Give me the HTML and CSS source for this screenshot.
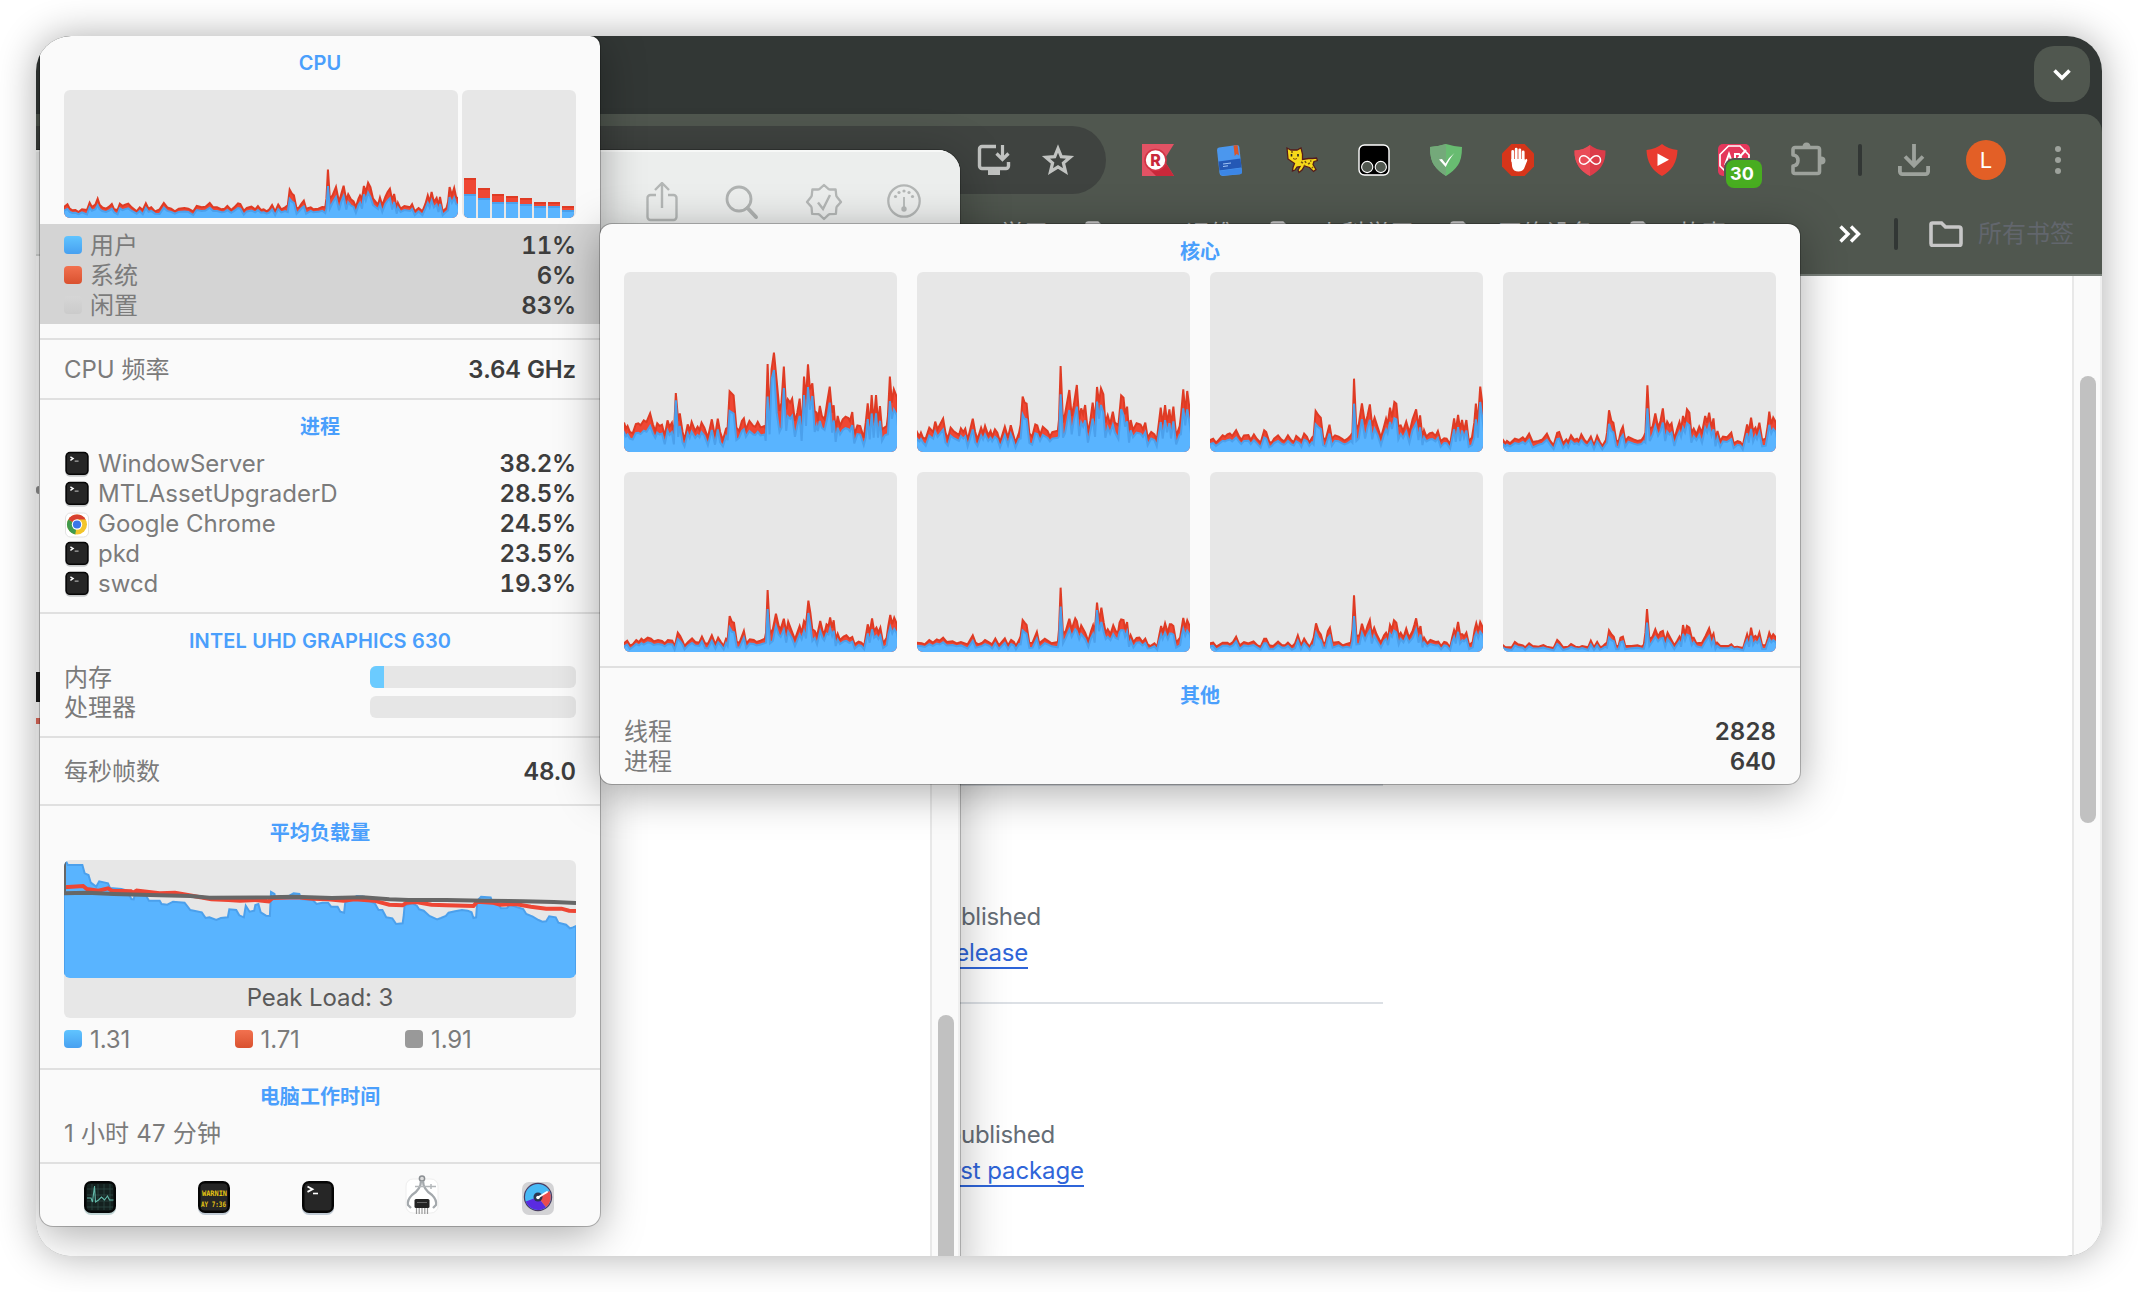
FILE: index.html
```html
<!DOCTYPE html>
<html lang="zh-CN">
<head>
<meta charset="utf-8">
<title>CPU</title>
<link rel="stylesheet" href="styles.css">
</head>
<body>
<svg class="defs" width="0" height="0">
  <defs>
    <symbol id="term" viewBox="0 0 32 36">
      <rect x="1" y="2" width="30" height="31" rx="6" fill="#8a8d90" opacity=".45"/>
      <rect x="1" y="1" width="30" height="30" rx="6" fill="#060606"/>
      <rect x="3" y="3" width="26" height="26" rx="4" fill="#262626"/>
      <path d="M7.500 7.500l3.500 2.200L7.500 12" fill="none" stroke="#fff" stroke-width="1.800"/>
      <path d="M13 13h5" stroke="#bbb" stroke-width="1.400"/>
    </symbol>
    <symbol id="folder" viewBox="0 0 34 26">
      <path d="M3.500 2h9l4 4H30a2 2 0 0 1 2 2v14.500a2 2 0 0 1-2 2H4a2 2 0 0 1-2-2V3.500A1.500 1.500 0 0 1 3.500 2z" fill="none" stroke="#c7c7c7" stroke-width="3.600"/>
    </symbol>
  </defs>
</svg>
<main class="desktop">
  <section class="browser">
    <div class="tabstrip">
      <button class="tab-search"><svg width="18" height="12" viewBox="0 0 18 12"><path d="M1.500 1.500L9 9l7.500-7.500" fill="none" stroke="#fff" stroke-width="3.600"/></svg></button>
    </div>
    <div class="chrome">
      <div class="toolbar">
        <div class="omnibox">
          <svg width="34" height="32" viewBox="0 0 34 32"><path d="M19 2.500H5A2.500 2.500 0 0 0 2.500 5v17A2.500 2.500 0 0 0 5 24.500h24a2.500 2.500 0 0 0 2.500-2.500v-4" fill="none" stroke="#c1c3c1" stroke-width="3.400"/><path d="M11 25h12v6H11z" fill="#c1c3c1"/><path d="M25.500 1v14M19.500 9.500l6 6 6-6" fill="none" stroke="#c1c3c1" stroke-width="3.200"/></svg>
          <svg width="34" height="34" viewBox="0 0 34 34"><path d="M17 5.500l3.300 8.200 8.800.6-6.700 5.700 2.100 8.600-7.500-4.700-7.500 4.700 2.100-8.600-6.700-5.700 8.800-.6z" fill="none" stroke="#c1c3c1" stroke-width="3.200"/></svg>
        </div>
        <div class="extensions">
          <svg width="32" height="32" viewBox="0 0 32 32"><path d="M0 0h32L22 16l10 16H0z" fill="#e25264"/><path d="M8 26l14-10 10 16H14z" fill="#c9283a"/><circle cx="13.500" cy="16" r="10.500" fill="#fff" stroke="#d23345" stroke-width="1.600"/><text x="13.500" y="21.500" text-anchor="middle" class="glyph-r">R</text></svg>
          <svg width="32" height="32" viewBox="0 0 32 32"><path d="M3 6Q3 4 5 3.600L23 1q2 0 2.300 2L28 28q0 2-2 2.300L9 32q-3 0-3.500-3z" fill="#4b97ee"/><path d="M4.500 17.500l22-3 1 9-22 3z" fill="#2458b5"/><path d="M6 27l21.500-3 .5 4q0 2-2 2.300L9 31.500q-3 0-3-4.500z" fill="#3c86e6"/><path d="M19.500 1.600l4-.6 1.500 10.500-2.300-1.500-2 2z" fill="#d8562c"/><path d="M9 20l8-1M9 22.500l5-.7" stroke="#9fc4f5" stroke-width="1"/></svg>
          <svg width="32" height="32" viewBox="0 0 32 32"><path d="M1 4l4 2h6l4-2 1.500 6v5.500l6-1h4l4-.5 1 2.500-3.500 1-1 3 3 5-2.500 2-4-4-5-1.500-2.500 4-3 2.500-1-2.500 2-3.500-3 .5-2 3-2.500 1 .5-3.500 1.500-4L2 15z" fill="#f7d91a" stroke="#541c1c" stroke-width="1.300"/><path d="M5.500 10v2.500M12 10v2.500" stroke="#222" stroke-width="1.600"/><path d="M15 18l2 1M19 17l1 2M22 20l2-1M24 17h1.500M18 21l1 1M26 23l1 1M5 8h2" stroke="#7a5a10" stroke-width="1.600"/><path d="M7 14.500q2 1.500 4 0" stroke="#7a4a10" fill="none"/></svg>
          <svg width="32" height="32" viewBox="0 0 32 32"><rect x="1" y="1" width="30" height="30" rx="5.500" fill="#000" stroke="#fff" stroke-width="1.400"/><circle cx="9.200" cy="23" r="5.600" fill="#50574f" stroke="#fff" stroke-width="1.100"/><circle cx="22.800" cy="23" r="5.600" fill="#50574f" stroke="#fff" stroke-width="1.100"/></svg>
          <svg width="32" height="32" viewBox="0 0 32 32"><path d="M16 0q8 2.500 16 3 0 12-4 18T16 32Q8 27 4 21T0 3q8-.5 16-3z" fill="#68bc71"/><path d="M16 0v32Q8 27 4 21T0 3q8-.5 16-3z" fill="#74a97a"/><path d="M9 15.500l3-.5 3.500 4.500Q19 13 24.500 9 20 14 15.700 23z" fill="#fff"/></svg>
          <svg width="32" height="32" viewBox="0 0 32 32"><path d="M9.400 0h13.200L32 9.400v13.200L22.600 32H9.400L0 22.600V9.400z" fill="#d6351a"/><path d="M10.700 17V7.500M14.200 15V5.200M17.800 15V5.800M21.200 16V8" stroke="#fff" stroke-width="2.800" stroke-linecap="round"/><path d="M9.300 15h13.300v1.500l1.500-1.800q1.700.3 1 2.300l-3 7.500q-1.500 3-5.600 3-5.200 0-6.300-4.500z" fill="#fff"/></svg>
          <svg width="32" height="32" viewBox="0 0 32 32"><path d="M16 1q6 5 15.500 5.500Q32 24 16 32 0 24 .500 6.500 10 6 16 1z" fill="#dc3c49"/><path d="M16 1v31Q0 24 .500 6.500 10 6 16 1z" fill="#e94c57"/><path d="M16 16c-3-4-5-4.200-6.300-4.200a4.200 4.200 0 0 0 0 8.400c1.600 0 3.300-.4 6.300-4.200s5-4.200 6.300-4.200a4.200 4.200 0 0 1 0 8.400c-1.600 0-3.300-.4-6.300-4.200z" fill="none" stroke="#fff" stroke-width="1.500"/></svg>
          <svg width="32" height="32" viewBox="0 0 32 32"><path d="M16 0q6 5 15.500 6Q31 24 16 32 1 24 .500 6 10 5 16 0z" fill="#e93b2f"/><path d="M11.500 9.500v12.500L23 15.800z" fill="#fff"/></svg>
          <span class="ext-badged">
            <svg width="32" height="32" viewBox="0 0 32 32"><rect width="32" height="32" rx="5" fill="#e5375b"/><path d="M10.500 2h11.500L31 11v11l-8 8H10L2 22V10.500z" fill="none" stroke="#fff" stroke-width="1.700"/><path d="M7 21l4-11 4 11M8 17.500h5M17 21V10h4l2 3-2 3 2 3-2 3M17 18L28 6" fill="none" stroke="#fff" stroke-width="2"/></svg>
            <b class="badge">30</b>
          </span>
          <svg width="36" height="36" viewBox="0 0 36 36"><path d="M5 6.500h22.500a2 2 0 0 1 2 2v22a2 2 0 0 1-2 2H5a2 2 0 0 1-2-2V25q5-.5 5-5.500T3 14V8.500a2 2 0 0 1 2-2z" fill="none" stroke="#9da29c" stroke-width="3.600" stroke-linejoin="round"/><path d="M12.500 6q0-4.500 4-4.500t4 4.500zM31 15.500q4.500 0 4.500 4t-4.500 4z" fill="#9da29c"/></svg>
        </div>
        <i class="bar"></i>
        <svg class="dl" width="32" height="32" viewBox="0 0 32 32"><path d="M16 0v21M7 12.500l9 9 9-9" fill="none" stroke="#9da29c" stroke-width="3.800"/><path d="M1.900 22v5.600a2.500 2.500 0 0 0 2.500 2.500h23.200a2.500 2.500 0 0 0 2.500-2.500V22" fill="none" stroke="#9da29c" stroke-width="3.800"/></svg>
        <span class="avatar">L</span>
        <span class="kebab"><i></i><i></i><i></i></span>
      </div>
      <div class="bookmarks">
        <div class="marks">
          <span class="mark m1">学习</span>
          <span class="mark m2"><svg class="fold" width="34" height="26"><use href="#folder"/></svg><span>运维</span></span>
          <span class="mark m3"><svg class="fold" width="34" height="26"><use href="#folder"/></svg><span>上科学习</span></span>
          <span class="mark m4"><svg class="fold" width="34" height="26"><use href="#folder"/></svg><span>网络设备</span></span>
          <span class="mark m5"><svg class="fold" width="34" height="26"><use href="#folder"/></svg><span>故事</span></span>
        </div>
        <svg class="more" width="22" height="18" viewBox="0 0 22 18"><path d="M1.500 1.500L9 9l-7.500 7.500M12 1.500L19.500 9 12 16.500" fill="none" stroke="#fff" stroke-width="3.400"/></svg>
        <i class="bar"></i>
        <svg class="all-icon" width="34" height="26"><use href="#folder"/></svg>
        <span class="all">所有书签</span>
      </div>
    </div>
    <div class="page">
      <aside class="side">
        <div class="block b1">
          <p class="note n1">No releases published</p>
          <a class="link l1">Create a new release</a>
        </div>
        <div class="block b2">
          <p class="note n2">No packages published</p>
          <a class="link l2">Publish your first package</a>
        </div>
      </aside>
      <div class="track"><i class="thumb"></i></div>
    </div>
  </section>

  <section class="front">
    <div class="front-bar">
      <svg width="34" height="40" viewBox="0 0 34 40"><path d="M11 13H5.500a3 3 0 0 0-3 3v19a3 3 0 0 0 3 3h23a3 3 0 0 0 3-3V16a3 3 0 0 0-3-3H23M17 26V2M10 8l7-7 7 7" fill="none" stroke="#b4b7b6" stroke-width="2.400"/></svg>
      <svg width="34" height="36" viewBox="0 0 34 36"><circle cx="14" cy="15" r="12" fill="none" stroke="#b0b3b2" stroke-width="2.800"/><path d="M22.500 24l8.500 9" stroke="#b0b3b2" stroke-width="4" stroke-linecap="round"/></svg>
      <svg width="38" height="38" viewBox="0 0 38 38"><path d="M19 2l4.600 4.200 1 .3 6-.2.700 6.500.5 1L36 19l-4.200 4.600-.4 1-.5 6.300-6.200.3-1.100.4L19 36l-4.600-4.400-1.100-.4-6.200-.3-.5-6.300-.4-1L2 19l4.200-5.200.5-1 .7-6.500 6 .2 1-.3z" fill="none" stroke="#b4b7b6" stroke-width="2.300" stroke-linejoin="round"/><path d="M13 19.500l5 6.500 7-14" fill="none" stroke="#b4b7b6" stroke-width="2.400"/></svg>
      <svg width="36" height="36" viewBox="0 0 36 36"><circle cx="18" cy="18" r="15.700" fill="none" stroke="#b4b7b6" stroke-width="2.300"/><path d="M18 14v12" stroke="#b4b7b6" stroke-width="1.800"/><circle cx="18" cy="26" r="2.700" fill="#b4b7b6"/><g fill="#b4b7b6"><circle cx="9.500" cy="13.500" r="1.600"/><circle cx="13" cy="9.500" r="1.600"/><circle cx="18" cy="8" r="1.600"/><circle cx="23" cy="9.500" r="1.600"/><circle cx="26.500" cy="13.500" r="1.600"/></g></svg>
    </div>
    <div class="front-page">
      <div class="slivers"><i class="s1"></i><i class="s2"></i><i class="s3"></i></div>
      <div class="track"><i class="thumb"></i></div>
    </div>
  </section>

  <section class="panel cpu">
    <header class="title t-cpu">CPU</header>
    <div class="graphs">
      <svg class="chart" data-series="cpu" viewBox="0 0 1030 384" preserveAspectRatio="none"></svg>
      <div class="bars">
        <i style="height:40px;--u:24px"></i><i style="height:30px;--u:20px"></i><i style="height:24px;--u:16px"></i><i style="height:22px;--u:16px"></i><i style="height:20px;--u:14px"></i><i style="height:16px;--u:12px"></i><i style="height:16px;--u:12px"></i><i style="height:12px;--u:8px"></i>
      </div>
    </div>
    <div class="selected">
      <div class="row"><i class="sw blue"></i><span>用户</span><b>11%</b></div>
      <div class="row"><i class="sw red"></i><span>系统</span><b>6%</b></div>
      <div class="row"><i class="sw idle"></i><span>闲置</span><b>83%</b></div>
    </div>
    <div class="sect freq"><div class="row"><span>CPU 频率</span><b>3.64 GHz</b></div></div>
    <div class="sect procs">
      <header class="title">进程</header>
      <div class="row"><svg class="app" width="26" height="28"><use href="#term"/></svg><span>WindowServer</span><b>38.2%</b></div>
      <div class="row"><svg class="app" width="26" height="28"><use href="#term"/></svg><span>MTLAssetUpgraderD</span><b>28.5%</b></div>
      <div class="row"><svg class="app" width="26" height="28" viewBox="0 0 26 28"><rect x="1.500" y="2" width="23" height="24" rx="5" fill="#fff" stroke="#e2e2e2"/><circle cx="13" cy="13.500" r="10" fill="#f3c52b"/><path d="M13 13.500L4.300 8.500A10 10 0 0 0 11.500 23.400z" fill="#3f9a4c"/><path d="M13 13.500L4.300 8.500A10 10 0 0 1 21.700 8.500z" fill="#d8402f"/><path d="M13 8.500h8.700L17 16l-5.500 7.400z" fill="#f3c52b"/><circle cx="13" cy="13.500" r="5.200" fill="#fff"/><circle cx="13" cy="13.500" r="4.100" fill="#3a76e8"/></svg><span>Google Chrome</span><b>24.5%</b></div>
      <div class="row"><svg class="app" width="26" height="28"><use href="#term"/></svg><span>pkd</span><b>23.5%</b></div>
      <div class="row"><svg class="app" width="26" height="28"><use href="#term"/></svg><span>swcd</span><b>19.3%</b></div>
    </div>
    <div class="sect gpu">
      <header class="title">INTEL UHD GRAPHICS 630</header>
      <div class="row"><span>内存</span><div class="meter"><i style="width:14px"></i></div></div>
      <div class="row"><span>处理器</span><div class="meter"></div></div>
    </div>
    <div class="sect fps"><div class="row"><span>每秒帧数</span><b>48.0</b></div></div>
    <div class="sect load">
      <header class="title">平均负载量</header>
      <div class="load-card">
        <svg class="load-chart" viewBox="0 0 1338 354" preserveAspectRatio="none">
          <path class="l-area" d="M0 360L0 8 6 6 10 15 48 15 54 40 64 45 70 68 84 80 92 64 115 70 120 84 150 87 165 92 176 117 182 118 186 100 215 108 222 122 250 122 255 132 270 134 285 125 315 128 322 138 330 150 360 157 370 174 380 172 398 180 410 174 428 172 432 148 450 150 458 166 470 172 475 137 485 155 497 152 500 135 508 132 514 157 528 167 538 168 541 96 550 102 552 115 560 110 585 110 600 100 615 102 620 117 650 120 660 132 675 128 690 128 698 140 715 140 722 155 732 158 735 127 750 120 765 108 785 110 792 120 812 130 822 150 832 150 842 172 858 175 868 192 885 190 888 165 890 137 910 130 922 137 928 148 940 152 955 168 975 178 985 174 998 168 1005 158 1022 154 1040 150 1055 152 1065 157 1070 174 1077 172 1080 122 1090 110 1115 112 1120 130 1135 132 1142 145 1158 144 1165 134 1185 142 1200 147 1208 162 1225 170 1240 180 1250 185 1260 184 1268 169 1285 172 1292 188 1312 194 1322 205 1330 202 1338 198V360z"/>
          <path class="l-red" d="M0 82L50 78 60 87 90 92 115 85 125 92 175 94 180 98 190 92 250 100 290 98 320 104 385 118 430 120 460 122 500 120 535 124 545 114 610 112 650 116 690 118 730 122 760 118 810 122 850 134 885 136 895 128 920 126 960 134 1000 136 1070 138 1080 125 1120 128 1140 134 1180 132 1220 140 1260 146 1300 146 1320 152 1338 153"/>
          <path class="l-gray" d="M0 6V100L60 98 130 102 250 106 330 108 380 113 540 112 600 110 700 114 780 112 850 118 900 120 1000 120 1100 122 1200 124 1280 126 1338 129"/>
        </svg>
        <p>Peak Load: 3</p>
      </div>
      <div class="legend">
        <span><i class="sw blue"></i>1.31</span><span><i class="sw red"></i>1.71</span><span><i class="sw gray"></i>1.91</span>
      </div>
    </div>
    <div class="sect uptime">
      <header class="title">电脑工作时间</header>
      <div class="row"><span>1 小时 47 分钟</span></div>
    </div>
    <div class="sect dock">
      <svg width="36" height="38" viewBox="0 0 36 38"><rect x="2" y="4" width="32" height="32" rx="7" fill="#9bb" opacity=".6"/><rect x="2" y="2" width="32" height="32" rx="7" fill="#050707"/><rect x="4.500" y="4.500" width="27" height="27" rx="4" fill="#14211f"/><path d="M10 5v26M16 5v26M22 5v26M28 5v26M5 10h26M5 16h26M5 22h26M5 28h26" stroke="#2c4a45" stroke-width=".8"/><path d="M5 19h4l1.500 4L12.500 7l1 16 3-2 3-3 3 3 3-4 2 4h4" fill="none" stroke="#62b8a8" stroke-width="1.100"/></svg>
      <svg width="36" height="38" viewBox="0 0 36 38"><rect x="2" y="4" width="32" height="32" rx="7" fill="#9ab" opacity=".6"/><rect x="2" y="2" width="32" height="32" rx="7" fill="#050505"/><rect x="4.500" y="4.500" width="27" height="27" rx="4" fill="#262626"/><text class="warn" x="6" y="17" textLength="25" lengthAdjust="spacingAndGlyphs">WARNIN</text><text class="warn" x="5" y="27.500" textLength="25" lengthAdjust="spacingAndGlyphs">AY 7:36</text></svg>
      <svg width="36" height="38" viewBox="0 0 36 38"><rect x="2" y="4" width="32" height="32" rx="7" fill="#9ab" opacity=".6"/><rect x="2" y="2" width="32" height="32" rx="7" fill="#050505"/><rect x="4.500" y="4.500" width="27" height="27" rx="4" fill="#262626"/><path d="M7.500 7.500l5 2.700-5 2.700" fill="none" stroke="#fff" stroke-width="1.800"/><path d="M13 14.500h5" stroke="#fff" stroke-width="1.600"/></svg>
      <svg width="36" height="42" viewBox="0 0 36 42"><rect x="2" y="4" width="32" height="34" rx="7" fill="#fff" stroke="#eee"/><circle cx="18" cy="3.500" r="2.600" fill="#ddd" stroke="#8a8e92" stroke-width="1.500"/><path d="M17 6Q17 14 8 20q-5 5-4 10l3 3M19 6q0 8 9 14 5 5 4 10l-3 3" fill="none" stroke="#a4a9ad" stroke-width="2.300"/><path d="M11 11.500h21M27 9v5" stroke="#b3b7ba" stroke-width="1.500"/><rect x="10.500" y="24" width="15" height="9" rx="1.500" fill="#232323"/><path d="M13 27.500h10" stroke="#666"/><path d="M12.500 33v6M15.200 33v6M18 33v6M20.800 33v6M23.500 33v6" stroke="#999" stroke-width="1.200"/></svg>
      <svg width="36" height="38" viewBox="0 0 36 38"><rect x="2" y="3" width="32" height="33" rx="7" fill="#d3d3d5"/><circle cx="18" cy="18" r="14.200" fill="#4a3d63"/><circle cx="18" cy="18" r="13" fill="#47b9f5"/><path d="M18 18L5.700 22.500a13 13 0 0 0 20.300 5.700z" fill="#5a2be0"/><path d="M18 18l8 10.200A13 13 0 0 0 29.500 12z" fill="#ea4c4c"/><circle cx="18" cy="18" r="4.500" fill="#2c3550"/><path d="M18 18.500l9-5.500" stroke="#fff" stroke-width="2" stroke-linecap="round"/><circle cx="18" cy="18.500" r="1.800" fill="#fff"/></svg>
    </div>
  </section>

  <section class="panel cores">
    <header class="title">核心</header>
    <div class="core-grid">
      <svg class="chart" data-series="c1" viewBox="0 0 690 540" preserveAspectRatio="none"></svg>
      <svg class="chart" data-series="c2" viewBox="0 0 690 540" preserveAspectRatio="none"></svg>
      <svg class="chart" data-series="c3" viewBox="0 0 690 540" preserveAspectRatio="none"></svg>
      <svg class="chart" data-series="c4" viewBox="0 0 690 540" preserveAspectRatio="none"></svg>
      <svg class="chart" data-series="c5" viewBox="0 0 690 540" preserveAspectRatio="none"></svg>
      <svg class="chart" data-series="c6" viewBox="0 0 690 540" preserveAspectRatio="none"></svg>
      <svg class="chart" data-series="c7" viewBox="0 0 690 540" preserveAspectRatio="none"></svg>
      <svg class="chart" data-series="c8" viewBox="0 0 690 540" preserveAspectRatio="none"></svg>
    </div>
    <div class="sect other">
      <header class="title">其他</header>
      <div class="row"><span>线程</span><b>2828</b></div>
      <div class="row"><span>进程</span><b>640</b></div>
    </div>
  </section>
</main>
<script src="charts.js"></script>
</body>
</html>
```
FILE: styles.css
```css
* { box-sizing: border-box; }
body {
  margin: 0; width: 2138px; height: 1292px; overflow: hidden; background: #fff;
  font-family: Inter, "Noto Sans CJK SC", sans-serif; font-size: 24px; line-height: 30px;
}
p { margin: 0; }
i { display: block; }
svg { display: block; flex: none; }
.defs { position: absolute; }
.desktop {
  position: relative; margin: 36px 0 0 36px; width: 2066px; height: 1220px;
  border-radius: 35px; box-shadow: 0 0 38px rgba(0,0,0,.32); background: #fff;
  overflow: clip; overflow-clip-margin: 0;
}

/* Browser window in the back */
.browser { position: absolute; inset: 0; background: #323735; display: flex; flex-direction: column; }
.tabstrip { height: 78px; padding: 10px 12px; display: flex; justify-content: flex-end; flex: none; }
.tab-search {
  width: 56px; height: 56px; border: 0; border-radius: 20px; background: #50574f;
  display: flex; align-items: center; justify-content: center; padding: 2px 0 0;
}
.chrome { height: 162px; flex: none; background: #50574f; border-radius: 0 18px 0 0; border-bottom: 2px solid #7b827c; }
.toolbar { height: 92px; padding: 12px 0 12px; display: flex; align-items: center; }
.omnibox {
  width: 1070px; height: 68px; border-radius: 0 34px 34px 0; background: #3f4340;
  display: flex; justify-content: flex-end; align-items: center; gap: 30px; padding-right: 31px; flex: none;
}
.extensions { display: flex; align-items: center; gap: 40px; margin-left: 36px; }
.extensions > :last-child { margin: -2px 0 0 0; }
.ext-badged { position: relative; }
.badge {
  position: absolute; left: 8px; top: 16px; width: 36px; height: 28px; border-radius: 8px;
  background: #48ad20; box-shadow: 0 0 0 2px #50574f; color: #fff; font-size: 18px; font-weight: 700;
  line-height: 28px; text-align: center; padding-right: 4px;
}
.glyph-r { font: 800 16px Inter, sans-serif; fill: #c9283a; }
.bar { width: 4px; height: 32px; border-radius: 2px; background: #323735; flex: none; }
.toolbar .bar { margin-left: 32px; }
.dl { margin-left: 36px; }
.avatar {
  width: 40px; height: 40px; border-radius: 50%; background: #e35f26; color: #fff; flex: none;
  margin-left: 36px; font-size: 22px; line-height: 41px; text-align: center;
}
.kebab { display: flex; flex-direction: column; gap: 5px; margin-left: 49px; }
.kebab i { width: 6px; height: 6px; border-radius: 50%; background: #9da29c; }
.bookmarks { height: 56px; display: flex; align-items: center; color: #c7c7c7; }
.marks { width: 1803px; display: flex; align-items: center; padding-left: 964px; flex: none; white-space: nowrap; }
.mark { display: flex; align-items: center; gap: 14px; line-height: 30px; flex: none; }
.m1 { width: 72px; } .m2 { width: 185px; } .m3 { width: 180px; } .m4 { width: 180px; }
.m2 { margin-left: 13px; }
.m2 > span { margin-left: 53px; }
.bookmarks .bar { margin-left: 33px; }
.all-icon { margin-left: 31px; }
.all { margin-left: 15px; color: #62666d; }
.page { flex: 1; background: #fff; display: flex; justify-content: space-between; min-height: 0; }
.side { width: 1347px; padding-top: 508px; display: flex; flex-direction: column; }
.block { border-top: 2px solid #dce0e5; height: 218px; padding-top: 113px; }
.note, .link { display: block; text-align: right; height: 36px; line-height: 36px; letter-spacing: -.25px; white-space: nowrap; }
.note { color: #656d76; }
.link { color: #2f65d9; text-decoration: underline; text-decoration-thickness: 2px; text-underline-offset: 6px; }
.n1 { width: 1005px; } .l1 { width: 992px; } .n2 { width: 1019px; } .l2 { width: 1048px; letter-spacing: -.1px; }
.track { width: 30px; border-left: 2px solid #e8e8e8; border-right: 2px solid #efefef; background: #fafafa; padding-left: 6px; }
.thumb { width: 16px; border-radius: 8px; background: #c1c1c1; }
.page .thumb { margin-top: 100px; height: 447px; }

/* Light window in front of the browser */
.front {
  position: absolute; left: -20px; top: 114px; width: 944px; height: 1140px; background: #fff;
  border-radius: 22px; box-shadow: 0 0 0 1px rgba(0,0,0,.22), 0 10px 50px rgba(0,0,0,.3);
  overflow: hidden; display: flex; flex-direction: column;
}
.front-bar {
  height: 106px; flex: none; background: #eceeed; border-bottom: 2px solid #d4d6d5;
  border-top: 2px solid #f7f8f7; display: flex; justify-content: flex-end; align-items: center;
  padding: 0 38px 3px 0; gap: 46px;
}
.front-bar svg:nth-child(3) { margin-right: -3px; }
.front-bar svg:nth-child(4) { margin-top: -1px; }
.front-page { flex: 1; display: flex; justify-content: space-between; }
.slivers { padding-left: 20px; }
.s1 { width: 3px; height: 8px; margin-top: 230px; border-radius: 4px 0 0 4px; background: #8b8b8b; }
.s2 { width: 4px; height: 30px; margin-top: 178px; background: #1b1b1b; }
.s3 { width: 4px; height: 6px; margin-top: 16px; background: #e0695a; }
.front .track { padding-left: 6px; }
.front .thumb { margin-top: 759px; height: 300px; }

/* Popup panels */
.panel { position: absolute; background: #fafafa; box-shadow: 0 0 0 1px rgba(0,0,0,.24), 0 8px 44px rgba(0,0,0,.34); color: #7b7b7b; }
.cpu { left: 4px; top: 0; width: 560px; height: 1190px; border-radius: 0 10px 13px 13px; }
.cores { left: 564px; top: 188px; width: 1200px; height: 560px; border-radius: 12px; padding-top: 13px; }
.title { color: #4a9ffc; font-size: 20px; font-weight: 600; line-height: 30px; text-align: center; letter-spacing: .1px; }
.row { display: flex; align-items: center; height: 30px; padding: 0 24px; }
.row span { letter-spacing: -.12px; }
.row span:lang(zh) { letter-spacing: 0; }
.row b { margin-left: auto; color: #3d3d3d; font-weight: 600; font-variant-numeric: tabular-nums; letter-spacing: -.15px; }
.sect { border-top: 2px solid #e0e0e0; }
.t-cpu { padding-top: 12px; height: 54px; }
.graphs { display: flex; gap: 4px; padding: 0 24px; height: 134px; }
.chart { background: #e7e7e7; border-radius: 6px; overflow: hidden; }
.graphs .chart { width: 394px; height: 128px; }
.bars { width: 114px; height: 128px; background: #e7e7e7; border-radius: 6px; display: flex; align-items: flex-end; gap: 2px; padding: 0 2px; overflow: hidden; }
.bars i {
  width: 12px; border-top: 2px solid #df3b24;
  background: linear-gradient(#59b4ff, #59b4ff) bottom / 100% calc(var(--u) - 2px) no-repeat,
    linear-gradient(#4ba0ec, #4ba0ec) bottom / 100% var(--u) no-repeat, #ef4734;
}
.bars i:first-child { border-bottom-left-radius: 5px; }
.bars i:last-child { border-bottom-right-radius: 5px; }
.selected { height: 100px; background: #d4d4d4; padding-top: 7px; margin-bottom: 14px; }
.sw { width: 18px; height: 18px; border-radius: 4px; margin-right: 8px; flex: none; }
.selected .sw { margin-top: -3px; }
.blue { background: linear-gradient(#60c4ff, #47a0f0); }
.red { background: linear-gradient(#f2714f, #d9512f); }
.idle { background: linear-gradient(#d6d6d6, #cbcbcb); }
.gray { background: #999; }
.freq { height: 60px; padding-top: 15px; }
.procs { height: 214px; padding-top: 12px; }
.procs .title { height: 37px; }
.app { margin: 2px 8px 0 0; }
.gpu { height: 124px; padding-top: 12px; }
.gpu .title { height: 37px; letter-spacing: .15px; }
.meter { margin-left: auto; margin-top: -3px; width: 206px; height: 22px; border-radius: 6px; background: #e6e6e6; overflow: hidden; }
.meter i { height: 22px; background: #6bcbff; }
.fps { height: 68px; padding-top: 19px; }
.load { height: 264px; padding-top: 12px; }
.load .title { height: 42px; }
.load-card { margin: 0 24px; height: 158px; border-radius: 6px; background: #e7e7e7; color: #5a5a5a; text-align: center; overflow: hidden; }
.load-card p { line-height: 40px; letter-spacing: -.1px; }
.load-chart { width: 512px; height: 118px; border-radius: 6px; overflow: hidden; }
.l-area { fill: #59b4ff; stroke: #4ba0ec; stroke-width: 2px; vector-effect: non-scaling-stroke; }
.l-red, .l-gray { fill: none; stroke: #ee4634; stroke-width: 4px; vector-effect: non-scaling-stroke; }
.l-gray { stroke: #676767; }
.legend { display: flex; padding: 7px 24px 0; }
.legend span { display: flex; align-items: center; width: 170.500px; letter-spacing: -.1px; }
.legend .sw { margin-top: -2px; }
.uptime { height: 94px; padding-top: 12px; }
.uptime .title { height: 37px; }
.uptime .row span { letter-spacing: .2px; }
.dock { height: 64px; display: flex; align-items: center; padding: 6px 0 0 42px; }
.dock svg:nth-child(1) { margin-right: 78px; }
.dock svg:nth-child(2), .dock svg:nth-child(3) { margin-right: 68px; }
.dock svg:nth-child(4) { margin: -4px 80px 0 0; }
.warn { font: 700 7.500px "DejaVu Sans Mono", monospace; fill: #e5c413; }
.cores > .title { height: 35px; }
.core-grid { display: grid; grid-template-columns: repeat(4, 273px); gap: 20px; padding: 0 24px; height: 394px; grid-auto-rows: 180px; }
.core-grid .chart { width: 273px; height: 180px; }
.other { padding-top: 13px; }
.other .title { height: 36px; }
.area-total { fill: #ef4734; stroke: #df3b24; stroke-width: 2px; vector-effect: non-scaling-stroke; }
.area-user { fill: #59b4ff; stroke: #4ba0ec; stroke-width: 2px; vector-effect: non-scaling-stroke; }
```
FILE: charts.js
```js
// Samples are "position:load" or "position:load:user"; user load defaults to a share of the total.
const series = {
  cpu: "0:35,9:43,15:30,22:25,30:26,38:20,47:28,60:26,67:48,73:35,82:42,88:60,93:42,100:34,110:30,118:36,125:44,131:28,140:26,146:45,153:38,160:42,168:45,177:34,190:22,198:34,206:26,214:46,221:30,228:34,238:22,250:28,261:47,270:34,280:30,290:22,300:30,315:32,325:30,338:22,347:38,360:34,370:36,381:47,390:34,400:34,412:28,420:30,427:38,437:26,445:34,455:46,461:44,470:24,478:32,490:36,500:28,507:38,515:26,522:28,530:22,537:28,544:41,552:22,560:42,568:28,578:34,585:40,590:87,596:75,601:70,608:30,615:34,621:45,627:54,633:30,645:34,652:28,665:30,675:35,683:34,686:60,690:147:98,695:60,702:70,711:95,719:50,725:75,731:99,738:55,743:73,750:58,757:52,763:35,770:60,774:70,779:60,784:98:73,789:80,795:108:78,801:95,808:60,815:50,821:42,826:63,832:40,840:65,846:80,852:90,858:55,863:74,870:30,873:47,880:30,890:38,905:34,910:43,917:22,927:32,937:22,945:45,951:70,956:50,961:80,967:50,974:62,979:40,983:65,990:22,1000:32,1004:50,1008:95,1014:70,1020:92,1025:65,1030:60",
  c1: "0:90,5:72,9:80,15:62,22:58,30:86,36:88,42:82,50:97,57:92,66:118,73:85,79:65,84:88,90:80,96:84,103:50,110:97,115:78,121:90,126:50,131:179:157,137:95,141:118,148:62,153:38,161:85,166:65,171:92,180:65,186:78,191:68,196:90,203:75,212:45,222:100,230:48,237:102,243:62,250:38,258:72,262:75,267:184,277:172,284:75,291:65,298:95,303:103,308:70,317:95,327:80,332:78,338:92,345:76,356:80,358:70,363:266:168,368:110,373:250:220,379:300:248,386:215:120,393:125,398:150,404:258:194,410:130,414:160,420:150,425:162,432:95,438:120,444:162,449:70,455:228:173,460:160,465:265:197,470:190,476:208:170,482:125,487:120,490:95,495:140,500:110,507:100,514:155,520:198:150,526:120,530:142,535:65,540:110,546:80,553:100,560:108,567:104,571:95,577:122,582:55,590:82,597:80,606:45,611:90,616:148,621:80,626:173,631:90,637:173,642:90,647:140,652:70,659:76,664:80,667:110,672:228,677:150,682:190,690:165",
  c2: "0:62,6:48,10:60,15:45,22:42,31:75,36:68,41:62,46:93,52:70,66:102,72:60,78:42,85:75,92:65,100:58,106:52,111:73,117:62,122:72,128:38,141:102,147:62,153:40,162:75,167:58,172:80,180:52,186:65,190:48,197:70,203:60,210:32,222:78,230:45,237:82,243:55,249:30,258:60,262:85,267:168,272:150,277:147,284:58,291:48,299:85,304:82,311:52,318:78,330:65,336:48,342:62,356:66,359:100,363:260:175,369:90,374:115,385:188,391:110,396:140,404:203,410:100,415:133,420:115,425:143,432:60,438:95,444:150,450:95,455:197:153,460:150,465:193:143,471:175,476:90,482:112,488:85,495:123,500:90,509:82,516:172:131,522:165,526:115,531:138,536:60,540:98,546:68,555:88,565:84,571:70,577:90,583:45,592:62,600:55,606:38,616:135,621:85,627:143,632:90,638:130,642:85,648:138,655:50,664:80,667:110,673:190:133,678:120,683:185:130,690:120",
  c3: "0:38,8:42,15:30,22:38,32:52,38:48,44:55,50:58,56:50,66:67,73:50,79:38,86:52,97:53,103:38,111:55,118:42,128:30,137:67,142:62,150:32,156:30,162:42,172:52,180:40,186:35,190:38,197:52,205:38,212:32,218:50,226:42,231:35,238:57,245:48,251:30,258:45,262:50,267:125,274:112,280:105,286:45,292:38,302:84,308:42,316:52,325:48,333:42,340:36,348:42,356:52,360:60,364:222:147,370:70,376:85,384:148,392:85,398:110,404:145,410:80,416:105,424:75,432:45,439:75,445:102,449:85,455:135,460:105,466:152,471:147,476:80,482:82,488:65,496:93,504:60,512:100,521:130,527:75,531:112,537:45,541:67,547:48,555:58,562:60,570:50,576:65,583:35,592:43,598:42,607:25,617:103,621:65,627:113,632:70,637:98,642:65,648:98,654:35,662:45,668:90,672:147,677:90,683:198:152,690:130",
  c4: "0:38,6:28,10:35,18:28,30:42,40:38,50:46,56:38,66:57,75:32,90:35,100:40,111:57,118:38,128:22,137:60,142:62,152:28,160:40,165:32,172:52,180:38,187:42,192:35,198:55,206:38,213:30,222:48,230:22,238:50,245:32,251:20,260:38,263:60,268:127,274:95,279:90,286:38,292:32,298:65,303:78,309:35,317:47,330:40,340:35,350:38,356:48,360:60,365:202:133,371:70,378:78,385:118,392:75,398:95,404:133,410:70,415:93,421:80,426:88,433:40,440:70,446:92,450:70,455:110,460:90,465:130,471:120,476:60,482:72,489:55,496:78,503:60,511:110,516:90,521:120,527:75,532:103,537:38,542:65,549:35,556:48,566:46,577:60,583:28,593:35,600:32,606:20,612:55,617:85,621:60,627:105,632:65,638:75,642:60,648:90,655:38,664:42,669:80,673:123,678:85,683:105,690:90",
  c5: "0:28,8:36,15:22,22:25,31:38,38:32,44:42,50:36,60:45,68:42,75:34,86:38,96:35,103:28,111:38,122:36,128:18,136:60,142:50,148:35,153:20,162:32,172:43,180:32,190:30,197:48,205:28,212:26,222:52,231:25,238:45,245:32,252:20,258:42,262:40,267:110,273:92,278:90,285:32,292:30,303:65,309:28,318:40,328:38,335:32,345:36,356:42,359:60,363:188:131,369:55,376:70,384:117,391:80,396:70,404:102,410:60,415:93,424:65,432:40,444:80,449:60,455:95,460:85,466:156:119,471:120,476:70,482:65,488:50,496:95,502:65,506:55,512:85,517:80,521:106,526:75,530:97,535:40,540:57,546:38,555:48,562:52,570:42,577:47,583:25,593:33,600:30,607:20,616:85,621:60,627:103,632:65,638:75,643:60,648:75,655:28,664:45,668:80,673:113,678:85,683:105,690:85",
  c6: "0:30,12:28,20:25,31:38,40:30,50:40,57:36,66:45,75:32,90:34,100:28,111:32,128:25,141:52,148:30,155:25,165:30,172:38,183:30,190:25,198:42,207:22,222:43,230:22,238:38,245:32,250:20,258:38,262:50,267:98,272:90,277:83,284:28,292:30,303:62,309:28,323:42,333:34,340:28,356:32,359:70,363:195:138,369:55,376:65,385:102,391:70,400:103,404:95,410:60,415:82,425:60,433:35,440:65,445:82,449:60,455:150:128,460:95,466:135,472:90,477:60,482:70,489:55,496:82,502:65,508:60,512:90,516:100,522:98,526:70,531:92,536:35,540:52,547:32,555:44,562:45,570:32,577:42,583:25,590:20,600:28,607:18,612:50,617:80,621:60,627:88,634:60,639:85,643:85,648:80,655:30,665:45,669:75,673:104,678:75,683:97,690:78",
  c7: "0:28,8:30,16:18,32:30,44:30,50:25,58:32,66:48,75:22,86:32,97:28,110:34,120:22,128:18,137:42,142:42,150:22,160:20,172:33,182:22,190:22,197:30,207:18,215:28,222:52,230:22,238:42,245:28,252:18,258:32,262:45,268:88,274:65,280:55,286:30,292:30,298:65,303:75,310:30,325:32,335:22,345:26,356:30,360:70,364:172:110,370:50,378:52,384:87,392:55,398:80,404:98,409:55,415:75,421:55,432:30,440:52,445:60,450:45,455:83,460:70,465:97,471:90,477:50,482:60,489:45,496:72,503:45,512:65,517:85,521:103,527:60,532:80,537:32,541:45,549:28,557:38,570:32,577:33,584:20,592:32,598:30,607:16,612:45,617:68,621:55,627:92,632:55,638:55,642:48,648:60,655:22,664:32,669:70,673:88,678:65,683:92,690:75",
  c8: "0:22,6:16,22:16,30:32,38:25,50:22,56:16,66:28,75:20,90:18,102:23,110:18,128:14,137:38,142:32,152:16,165:18,172:26,183:18,192:16,200:20,215:16,222:36,230:16,238:32,245:18,251:18,258:26,263:30,268:67,274:55,280:48,286:20,292:20,297:45,303:48,309:20,325:20,340:22,350:18,356:24,360:60,364:131:90,370:40,378:48,385:70,392:48,398:62,404:65,410:35,416:60,424:42,433:22,440:35,446:48,450:35,455:83,460:55,465:80,471:75,477:45,482:45,489:28,503:30,512:50,521:73,527:45,532:57,537:22,541:30,549:20,570:20,577:25,584:16,592:18,607:14,612:35,617:55,622:35,627:75,632:45,638:50,643:42,648:60,655:22,664:22,669:42,673:60,678:45,683:55,690:45"
};
const NS = "http://www.w3.org/2000/svg";
document.querySelectorAll("svg[data-series]").forEach((svg) => {
  const box = svg.viewBox.baseVal;
  const pts = series[svg.dataset.series].split(",").map((s) => s.split(":").map(Number));
  const add = (cls, value) => {
    const p = document.createElementNS(NS, "path");
    const line = pts.map((q, i) => q[0] + " " + (box.height - value(q, i) + 2)).join("L");
    p.setAttribute("class", cls);
    p.setAttribute("d", "M-9 " + (box.height + 9) + "L" + line + "L" + (box.width + 9) + " " + (box.height + 9) + "z");
    svg.appendChild(p);
  };
  add("area-total", (q) => q[1]);
  add("area-user", (q, i) => {
    if (q[2]) return q[2];
    const near = Math.max(pts[i - 1] ? pts[i - 1][1] : 0, pts[i + 1] ? pts[i + 1][1] : 0);
    return q[1] < near * 0.62 ? q[1] * 0.5 : Math.max(q[1] * 0.68, q[1] < 50 ? q[1] - 14 : 0);
  });
});
```
